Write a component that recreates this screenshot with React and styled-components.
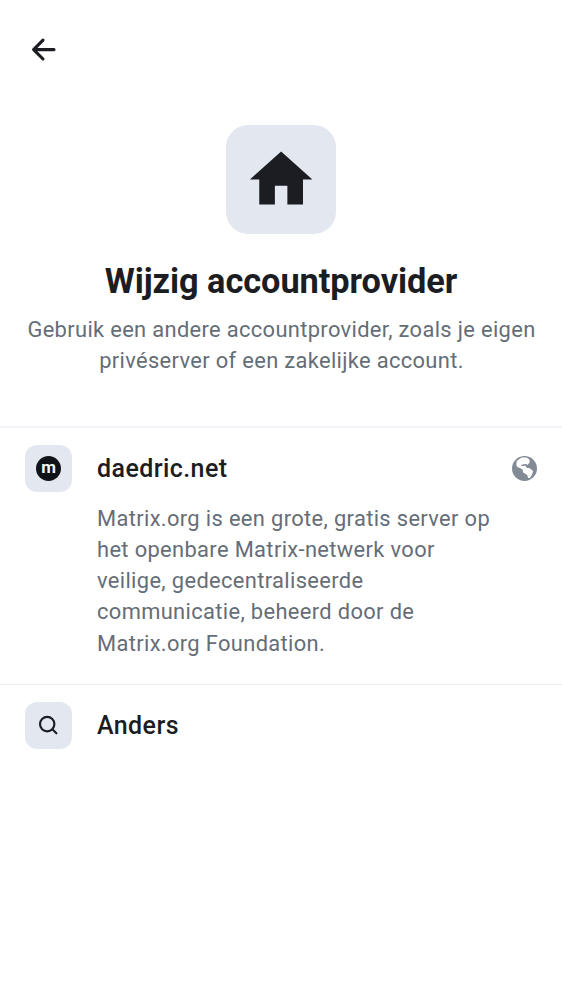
import React from 'react';
import styled, { createGlobalStyle } from 'styled-components';

const GlobalStyle = createGlobalStyle`
  * { box-sizing: border-box; }
  body { margin: 0; background: #fff; font-family: Roboto, "Liberation Sans", sans-serif; color: #1b1d22; }
  h1, h2, p { margin: 0; }
  svg { display: block; flex: none; }
`;

const Screen = styled.main`
  width: 100%;
  min-height: 1000px;
  background: #fff;
  display: flex;
  flex-direction: column;
`;

const TopBar = styled.header`
  height: 100px;
  padding: 0 0 1px 25px;
  display: flex;
  align-items: center;
`;

const BackButton = styled.button`
  border: 0;
  padding: 0;
  background: none;
  color: #1b1d22;
`;

const Hero = styled.section`
  height: 326px;
  padding-top: 25px;
  display: flex;
  flex-direction: column;
  align-items: center;
  text-align: center;
`;

const Tile = styled.div`
  flex: none;
  width: ${({ $size }) => $size}px;
  height: ${({ $size }) => $size}px;
  border-radius: ${({ $radius }) => $radius}px;
  background: #e3e8f0;
  display: flex;
  align-items: center;
  justify-content: center;
`;

const Title = styled.h1`
  margin-top: 25px;
  font-size: 34.35px;
  line-height: 44px;
  font-weight: 700;
  letter-spacing: -0.05px;
`;

const Text = styled.p`
  font-size: 21.86px;
  line-height: 31.2px;
  letter-spacing: 0.345px;
  color: #656d77;
`;

const Subtitle = styled(Text)`
  margin-top: 10.4px;
  padding-left: 1px;
  width: 520px;
`;

const Provider = styled.section`
  height: ${({ $height }) => $height}px;
  border-top: ${({ $line }) => $line};
  padding: 17px 25px 0;
  display: flex;
  flex-direction: column;
`;

const ProviderRow = styled.div`
  display: flex;
  align-items: center;
`;

const Name = styled.h2`
  flex: 1;
  margin-left: 25px;
  font-size: 24.98px;
  line-height: 36px;
  font-weight: 500;
  letter-spacing: 0.43px;
`;

const Description = styled(Text)`
  margin: 10.7px 0 0 72px;
  width: 400px;
  letter-spacing: 0.36px;
`;

const MatrixBadge = styled.span`
  width: 25px;
  height: 25px;
  border-radius: 50%;
  background: #101317;
  color: #f4f6fa;
  font-size: 17px;
  line-height: 22px;
  font-weight: 700;
  text-align: center;
`;

const ArrowIcon = () => (
  <svg width="37" height="37" viewBox="0 0 37 37" fill="none" stroke="currentColor" strokeWidth="3.1" strokeLinecap="round" strokeLinejoin="round">
    <path d="M29 18.6H8.6M18 9.2l-9.4 9.4 9.4 9.4" />
  </svg>
);

const HomeIcon = () => (
  <svg width="75" height="75" viewBox="-0.2 0 24 24" fill="#1b1d22">
    <path d="M10 20v-6h4v6h5v-8h3L12 3 2 12h3v8z" />
  </svg>
);

const GlobeIcon = () => (
  <svg width="25" height="25" viewBox="0 0 25 25">
    <circle cx="12.5" cy="12.5" r="12.5" fill="#818a95" />
    <path fill="#fff" d="M9.5 1.6 14.8 1.5 17.6 3.7 17.5 6.7 15.4 8.9 14.2 8 11.5 8.2 9.1 8.9 9.4 10.1 13.6 9.7 14.6 11.7 17.2 12.1 21.2 15.1 19.9 18.8 18 22 16.2 22 15.1 18.8 11.3 16.7 10.5 13.4 8.4 12.2 5.4 11.1 4.3 9 4.7 5.1Z" />
  </svg>
);

const SearchIcon = () => (
  <svg width="25" height="25" viewBox="0.4 0.5 25 25" fill="none" stroke="#1b1d22" strokeWidth="2.15" strokeLinecap="round">
    <circle cx="11.6" cy="11.6" r="7.2" />
    <path d="m17 17 3.8 3.8" />
  </svg>
);

export default function App() {
  return (
    <>
      <GlobalStyle />
      <Screen>
        <TopBar>
          <BackButton aria-label="Terug"><ArrowIcon /></BackButton>
        </TopBar>
        <Hero>
          <Tile $size={109.3} $radius={22}><HomeIcon /></Tile>
          <Title>Wijzig accountprovider</Title>
          <Subtitle>Gebruik een andere accountprovider, zoals je eigen privéserver of een zakelijke account.</Subtitle>
        </Hero>
        <Provider $height={258} $line="2px solid #f2f3f8">
          <ProviderRow>
            <Tile $size={47} $radius={12}><MatrixBadge>m</MatrixBadge></Tile>
            <Name>daedric.net</Name>
            <GlobeIcon />
          </ProviderRow>
          <Description>Matrix.org is een grote, gratis server op het openbare Matrix-netwerk voor veilige, gedecentraliseerde communicatie, beheerd door de Matrix.org Foundation.</Description>
        </Provider>
        <Provider $height={90} $line="1px solid #ebedf0">
          <ProviderRow>
            <Tile $size={47} $radius={12}><SearchIcon /></Tile>
            <Name>Anders</Name>
          </ProviderRow>
        </Provider>
      </Screen>
    </>
  );
}
